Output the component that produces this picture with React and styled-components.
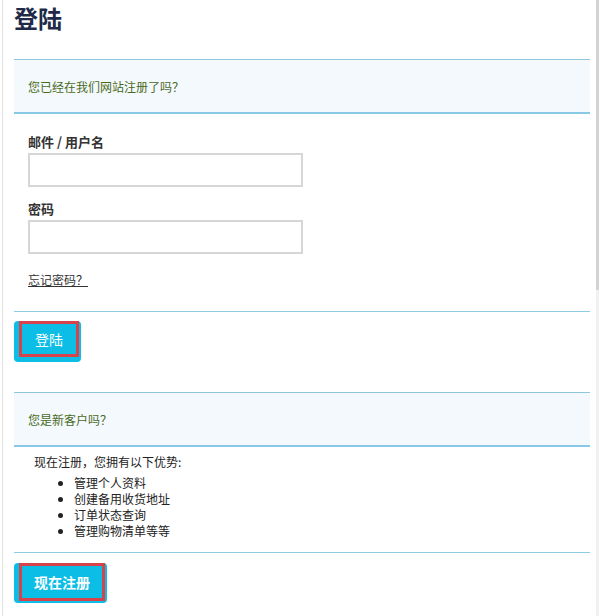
import React from 'react'
import styled, { createGlobalStyle } from 'styled-components'

const GlobalStyle = createGlobalStyle`
html, body {
  margin: 0;
  padding: 0;
  background: #ffffff;
}
body {
  font-family: "Noto Sans CJK SC", "Noto Sans", "Liberation Sans", sans-serif;
  color: #333;
}
`

const Page = styled.div`
display: flex;
width: 599px;
min-height: 616px;
`

const Frame = styled.div`
flex: 1;
margin-left: 2px;
border-left: 1px solid #e2e2e2;
padding: 0 6px 0 11px;
`

const ScrollTrack = styled.div`
width: 3px;
display: flex;
flex-direction: column;
background: #f1f1f1;
`

const ScrollThumb = styled.div`
height: 290px;
background: #d3d3d3;
`

const Title = styled.h1`
margin: 0 0 24px;
font-size: 24px;
line-height: 35px;
font-weight: 700;
color: #1e2a48;
`

const Notice = styled.div`
display: flex;
align-items: center;
height: 52px;
margin-top: ${p => p.top || 0}px;
padding: 0 14px;
background: #f3f9fc;
border-top: 1px solid #8fc6dc;
border-bottom: 2px solid #86c8e6;
font-size: 12px;
color: #4a6a1e;
`

const Form = styled.form`
padding: 19px 14px 0;
`

const Label = styled.label`
display: block;
margin-top: ${p => p.first ? '0' : '13px'};
margin-bottom: 2px;
font-size: 13px;
line-height: 18px;
font-weight: 700;
color: #333;
`

const Input = styled.input`
display: block;
box-sizing: border-box;
width: 275px;
height: 34px;
margin: 0;
border: 2px solid #d6d6d8;
background: #fff;
outline: none;
`

const Forgot = styled.a`
display: inline-block;
margin-top: 18px;
font-size: 12px;
line-height: 16px;
color: #333;
text-decoration: underline;
`

const Divider = styled.div`
height: 1px;
background: #8fcbe3;
margin-top: ${p => p.top}px;
`

const Button = styled.button`
display: flex;
margin: ${p => p.top}px 0 0;
padding: 0 2px ${p => p.bottom}px 5px;
border: none;
border-radius: 4px;
background: #0cbde6;
cursor: pointer;
font-family: inherit;
`

const ButtonInner = styled.span`
display: flex;
align-items: center;
height: ${p => p.h}px;
padding: 0 ${p => p.pad}px;
border: 3px solid #d8434b;
color: #fff;
font-size: 14px;
font-weight: ${p => p.bold ? 700 : 400};
`

const Intro = styled.p`
margin: 7px 0 0;
padding-left: 20px;
font-size: 12px;
line-height: 16px;
color: #222;
`

const Perks = styled.ul`
margin: 5px 0 0;
padding-left: 60px;
font-size: 12px;
line-height: 16px;
color: #222;
`

export default function App() {
  return (
    <Page>
      <GlobalStyle />
      <Frame>
        <Title>登陆</Title>

        <Notice>您已经在我们网站注册了吗？</Notice>

        <Form onSubmit={e => e.preventDefault()}>
          <Label first>邮件 / 用户名</Label>
          <Input type="text" />
          <Label>密码</Label>
          <Input type="password" />
          <Forgot href="#">忘记密码？</Forgot>
        </Form>

        <Divider top={21} />
        <Button top={9} bottom={5}>
          <ButtonInner h={30} pad={13}>登陆</ButtonInner>
        </Button>

        <Notice top={30}>您是新客户吗？</Notice>

        <Intro>现在注册，您拥有以下优势:</Intro>
        <Perks>
          <li>管理个人资料</li>
          <li>创建备用收货地址</li>
          <li>订单状态查询</li>
          <li>管理购物清单等等</li>
        </Perks>

        <Divider top={13} />
        <Button top={10} bottom={2}>
          <ButtonInner h={32} pad={12} bold>现在注册</ButtonInner>
        </Button>
      </Frame>
      <ScrollTrack>
        <ScrollThumb />
      </ScrollTrack>
    </Page>
  )
}
